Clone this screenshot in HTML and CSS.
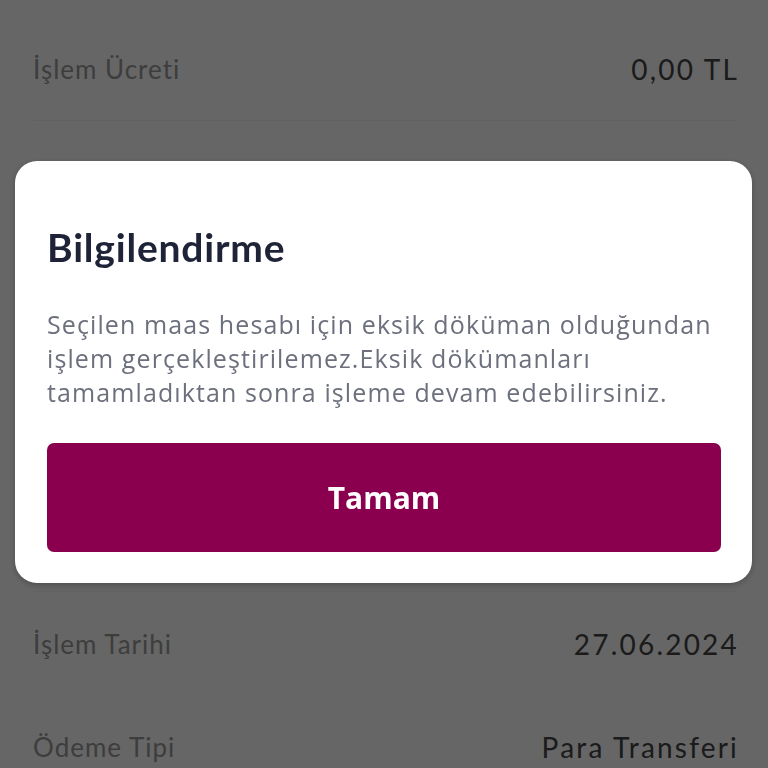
FILE: index.html
```html
<!DOCTYPE html>
<html lang="tr">
<head>
<meta charset="utf-8">
<title>Bilgilendirme</title>
<link rel="stylesheet" href="styles.css">
</head>
<body>
<main class="page">
  <div class="row row-first">
    <span class="label">İşlem Ücreti</span>
    <span class="value">0,00 TL</span>
  </div>
  <div class="hidden-rows" aria-hidden="true"></div>
  <div class="row">
    <span class="label">İşlem Tarihi</span>
    <span class="value">27.06.2024</span>
  </div>
  <div class="row">
    <span class="label">Ödeme Tipi</span>
    <span class="value">Para Transferi</span>
  </div>
</main>

<div class="overlay">
  <section class="modal" role="dialog" aria-labelledby="modal-title">
    <h2 class="modal-title" id="modal-title">Bilgilendirme</h2>
    <p class="modal-text">Seçilen maas hesabı için eksik döküman olduğundan işlem gerçekleştirilemez.Eksik dökümanları tamamladıktan sonra işleme devam edebilirsiniz.</p>
    <button class="modal-button" type="button">Tamam</button>
  </section>
</div>
</body>
</html>
```

FILE: styles.css
```css
* { box-sizing: border-box; }

html, body {
  margin: 0;
  padding: 0;
  width: 768px;
  height: 768px;
  overflow: hidden;
  background: #ffffff;
  font-family: "Lato", "Noto Sans", sans-serif;
}

.page {
  display: flex;
  flex-direction: column;
  padding: 18px 31px 0 33px;
}

.row {
  display: flex;
  align-items: center;
  justify-content: space-between;
  height: 103px;
  flex: none;
}

.row-first {
  border-bottom: 1px solid #f2f2f2;
}

.hidden-rows {
  height: 471px;
  flex: none;
  border-bottom: 1px solid #f2f2f2;
}

.label {
  font-size: 26px;
  letter-spacing: 1px;
  color: #9a9a9a;
}

.value {
  font-size: 28px;
  letter-spacing: 2.2px;
  margin-right: -2px;
  color: #444444;
}

.overlay {
  position: fixed;
  inset: 0;
  background: rgba(0, 0, 0, 0.6);
  padding: 161px 16px 0 15px;
}

.modal {
  background: #ffffff;
  border-radius: 22px;
  padding: 66px 31px 31px 32px;
  box-shadow: 0 2px 6px rgba(0, 0, 0, 0.25);
}

.modal-title {
  margin: 0;
  font-size: 39px;
  font-weight: 700;
  letter-spacing: 0.8px;
  line-height: 40px;
  color: #1e2337;
}

.modal-text {
  margin: 40px 0 0;
  font-family: "Open Sans", "Lato", sans-serif;
  font-size: 25px;
  letter-spacing: 1.1px;
  line-height: 34px;
  color: #6c707d;
}

.modal-button {
  display: block;
  width: 100%;
  height: 109px;
  margin-top: 34px;
  border: none;
  border-radius: 7px;
  background: #8a004f;
  color: #ffffff;
  font-family: "Open Sans", "Lato", sans-serif;
  font-size: 30px;
  font-weight: 700;
  cursor: pointer;
}
```
